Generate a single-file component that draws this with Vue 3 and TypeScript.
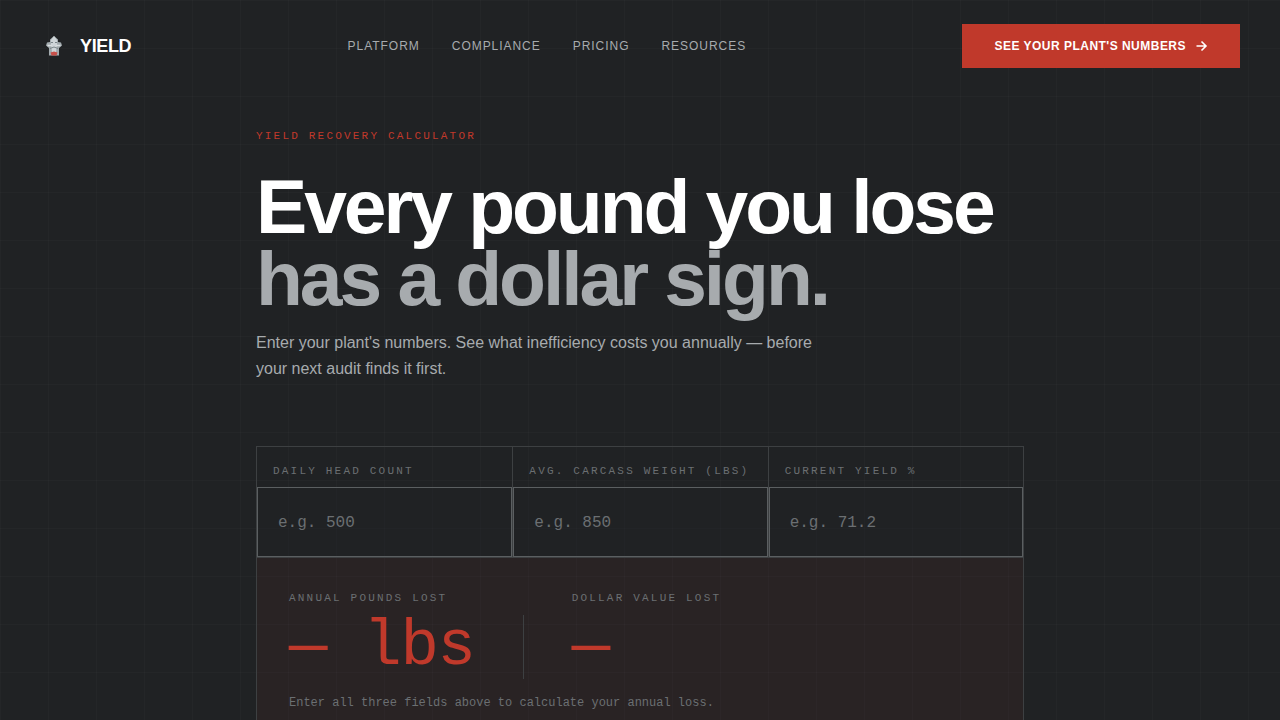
<script setup lang="ts">
import { computed, reactive } from 'vue'

type Key = 'head' | 'weight' | 'yieldPct'
interface Field { key: Key; label: string; hint: string }

const links: string[] = ['Platform', 'Compliance', 'Pricing', 'Resources']
const fields: Field[] = [
  { key: 'head', label: 'Daily head count', hint: 'e.g. 500' },
  { key: 'weight', label: 'Avg. carcass weight (lbs)', hint: 'e.g. 850' },
  { key: 'yieldPct', label: 'Current yield %', hint: 'e.g. 71.2' },
]
const form = reactive<Record<Key, string>>({ head: '', weight: '', yieldPct: '' })

const TARGET_YIELD = 75
const WORKING_DAYS = 250
const PRICE_PER_LB = 3

const pounds = computed<number | null>(() => {
  const h = Number(form.head)
  const w = Number(form.weight)
  const y = Number(form.yieldPct)
  if (!h || !w || !y) return null
  return Math.round((h * w * WORKING_DAYS * Math.max(0, TARGET_YIELD - y)) / 100)
})
const poundsText = computed(() => (pounds.value === null ? '—' : pounds.value.toLocaleString('en-US')) + ' lbs')
const dollarsText = computed(() => (pounds.value === null ? '—' : '$' + (pounds.value * PRICE_PER_LB).toLocaleString('en-US')))
</script>

<template>
  <div class="page">
    <header class="bar">
      <a class="brand" href="#">
        <svg class="logo" width="28" height="28" viewBox="0 0 28 28" aria-hidden="true">
          <path d="M14 4l4 3.5v2.5l3 .5 1 3-3 2.5v7.500H9V16l-3-2.500 1-3 3-.5V7.500z" fill="#a3abaf" />
          <path d="M14 4l3 4v4l-1 8h-4l-1-8V8z" fill="#cfd5d8" />
          <path d="M7.500 13.500H12M16 13.500h4.500" stroke="#d9dee0" stroke-width="1.500" />
          <path d="M11 10.500h2M15 10.500h2M10 16.500l4-1.500 4 1.500" fill="none" stroke="#7b8589" stroke-width="1" />
          <path d="M10.500 20.500l3.500-1 3.500 1-1 3h-5z" fill="#c8504a" />
        </svg>
        <span>YIELD</span>
      </a>
      <nav class="links">
        <a v-for="l in links" :key="l" href="#">{{ l }}</a>
      </nav>
      <a class="cta" href="#calculator">
        <span>See your plant's numbers</span>
        <svg width="12" height="12" viewBox="0 0 12 12" fill="none" stroke="currentColor" stroke-width="1.600" aria-hidden="true">
          <path d="M0.500 6h9M5.500 1.500L10 6l-4.500 4.500" />
        </svg>
      </a>
    </header>

    <main class="content">
      <p class="eyebrow">Yield recovery calculator</p>
      <h1>Every pound you lose<br /><span>has a dollar sign.</span></h1>
      <p class="lead">Enter your plant's numbers. See what inefficiency costs you annually — before your next audit finds it first.</p>

      <form id="calculator" class="calc" @submit.prevent>
        <div class="fields">
          <div v-for="f in fields" :key="f.key" class="field">
            <label :for="f.key">{{ f.label }}</label>
            <input :id="f.key" v-model="form[f.key]" type="text" inputmode="decimal" :placeholder="f.hint" />
          </div>
        </div>
        <section class="results">
          <div class="totals">
            <div class="total">
              <span class="caption">Annual pounds lost</span>
              <output class="value">{{ poundsText }}</output>
            </div>
            <div class="rule"></div>
            <div class="total">
              <span class="caption">Dollar value lost</span>
              <output class="value">{{ dollarsText }}</output>
            </div>
          </div>
          <p class="note">Enter all three fields above to calculate your annual loss.</p>
        </section>
      </form>
    </main>
  </div>
</template>

<style>
body {
  margin: 0;
  background: #202224;
}
</style>

<style scoped>
.page {
  box-sizing: border-box;
  min-height: 100vh;
  background-color: #202224;
  background-image:
    linear-gradient(rgba(255, 255, 255, 0.02) 1px, transparent 1px),
    linear-gradient(90deg, rgba(255, 255, 255, 0.02) 1px, transparent 1px);
  background-size: 48px 48px;
  font-family: "Liberation Sans", Arial, sans-serif;
  color: #fff;
}
.bar {
  display: flex;
  align-items: center;
  justify-content: space-between;
  padding: 24px 40px;
}
.brand {
  display: flex;
  align-items: center;
  gap: 12px;
  color: #fff;
  font-size: 18px;
  font-weight: 700;
  letter-spacing: -0.02em;
  text-decoration: none;
}
.links {
  display: flex;
  gap: 32px;
}
.links a {
  color: #a7abae;
  font-size: 12px;
  letter-spacing: 0.08em;
  line-height: 16px;
  text-decoration: none;
  text-transform: uppercase;
}
.cta {
  display: flex;
  align-items: center;
  gap: 10px;
  padding: 0 32px;
  background: #c0392b;
  color: #fff;
  font-size: 12px;
  font-weight: 700;
  letter-spacing: 0.04em;
  line-height: 44px;
  text-decoration: none;
  text-transform: uppercase;
}
.content {
  max-width: 768px;
  margin: 0 auto;
  padding: 36px 24px 64px;
}
.eyebrow,
.field label,
.caption {
  font-family: "Liberation Mono", monospace;
  font-size: 11px;
  letter-spacing: 0.2em;
  line-height: 16px;
  text-transform: uppercase;
}
.eyebrow {
  margin: 0 0 26px;
  color: #c0392b;
}
h1 {
  margin: 0;
  font-size: clamp(48px, 6vw, 80px);
  font-weight: 700;
  letter-spacing: -0.04em;
  line-height: 72px;
}
h1 span {
  color: #a7abae;
}
.lead {
  max-width: 560px;
  margin: 16px 0 64px;
  color: #a7abae;
  font-size: 16px;
  line-height: 26px;
}
.calc {
  border: 1px solid #3d4042;
}
.fields {
  display: grid;
  grid-template-columns: repeat(3, 1fr);
}
.field {
  display: flex;
  flex-direction: column;
}
.field + .field {
  border-left: 1px solid #3d4042;
}
.field label {
  padding: 16px 16px 8px;
  color: #6b6f72;
}
.field input {
  box-sizing: border-box;
  width: 100%;
  height: 70px;
  padding: 2px 20px 0;
  border: 1px solid #5b5f61;
  border-radius: 0;
  background: rgba(32, 36, 37, 0.4);
  color: #fff;
  font-family: "Liberation Mono", monospace;
  font-size: 16px;
  outline: none;
}
.field input:focus {
  border-color: #c0392b;
}
.field input::placeholder {
  color: #6b6f72;
  opacity: 1;
}
.results {
  padding: 32px;
  border-top: 1px solid #3d4042;
  background: rgba(192, 57, 43, 0.06);
}
.totals {
  display: flex;
  align-items: flex-end;
  gap: 48px;
}
.total {
  display: flex;
  flex-direction: column;
  gap: 9px;
}
.caption {
  color: #6b6f72;
}
.value {
  color: #c0392b;
  font-family: "Liberation Mono", monospace;
  font-size: 64px;
  letter-spacing: -0.02em;
  line-height: 64px;
}
.rule {
  width: 1px;
  height: 64px;
  background: #3d4042;
}
.note {
  margin: 16px 0 0;
  color: #6b6f72;
  font-family: "Liberation Mono", monospace;
  font-size: 12px;
  line-height: 16px;
}
@media (max-width: 800px) {
  .links {
    display: none;
  }
  h1 {
    line-height: 48px;
  }
  .fields {
    grid-template-columns: 1fr;
  }
  .totals {
    flex-wrap: wrap;
  }
}
</style>
